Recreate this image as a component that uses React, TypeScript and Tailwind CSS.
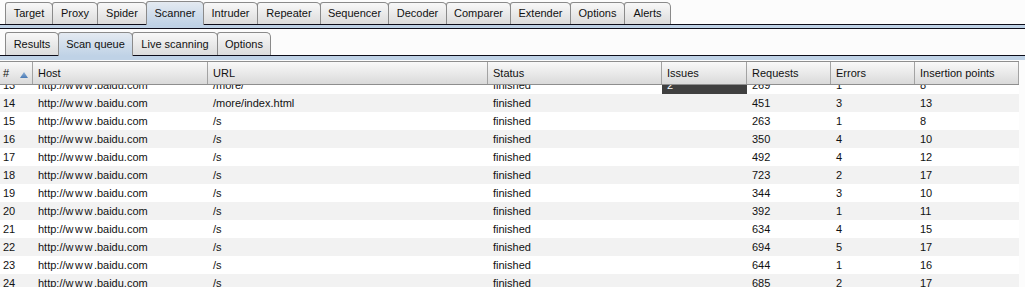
import React from "react";

type TabDef = { label: string; w: string; selected?: boolean };

const topTabs: TabDef[] = [
  { label: "Target", w: "w-[48px]" },
  { label: "Proxy", w: "w-[46px]" },
  { label: "Spider", w: "w-[50px]" },
  { label: "Scanner", w: "w-[58px]", selected: true },
  { label: "Intruder", w: "w-[55px]" },
  { label: "Repeater", w: "w-[64px]" },
  { label: "Sequencer", w: "w-[69px]" },
  { label: "Decoder", w: "w-[59px]" },
  { label: "Comparer", w: "w-[65px]" },
  { label: "Extender", w: "w-[61px]" },
  { label: "Options", w: "w-[55px]" },
  { label: "Alerts", w: "w-[47px]" },
];

const subTabs: TabDef[] = [
  { label: "Results", w: "w-[54px]" },
  { label: "Scan queue", w: "w-[75px]", selected: true },
  { label: "Live scanning", w: "w-[86px]" },
  { label: "Options", w: "w-[54px]" },
];

function Tab({ t, first, sub }: { t: TabDef; first: boolean; sub?: boolean }) {
  const base =
    "relative flex items-center justify-center border border-b-0 border-[#8a8a8a] rounded-tl-[3px] rounded-tr-[5px] text-[#111]";
  const pos = first ? "" : "-ml-px";
  if (t.selected) {
    return (
      <div
        className={`${base} ${pos} ${t.w} h-[24px] -mb-px z-10 bg-gradient-to-b from-[#e4eaf1] to-[#bfd2e6]`}
      >
        <span className="-mt-px">{t.label}</span>
      </div>
    );
  }
  return (
    <div
      className={`${base} ${pos} ${t.w} ${sub ? "h-[23px]" : "h-[22px]"} bg-gradient-to-b from-[#f8f8f8] to-[#dcdcdc]`}
    >
      <span>{t.label}</span>
    </div>
  );
}

const colW = [
  "w-[33px] pl-[3px]",
  "w-[175px] pl-[5px]",
  "w-[280px] pl-[5px]",
  "w-[174px] pl-[5px]",
  "w-[85px] pl-[5px]",
  "w-[84px] pl-[5px]",
  "w-[84px] pl-[5px]",
  "w-[104px] pl-[5px]",
];

const headers = ["#", "Host", "URL", "Status", "Issues", "Requests", "Errors", "Insertion points"];

const rows: [string, string, string, string, string, string, string, string][] = [
  ["13", "http://www.baidu.com", "/more/", "finished", "2", "269", "1", "8"],
  ["14", "http://www.baidu.com", "/more/index.html", "finished", "", "451", "3", "13"],
  ["15", "http://www.baidu.com", "/s", "finished", "", "263", "1", "8"],
  ["16", "http://www.baidu.com", "/s", "finished", "", "350", "4", "10"],
  ["17", "http://www.baidu.com", "/s", "finished", "", "492", "4", "12"],
  ["18", "http://www.baidu.com", "/s", "finished", "", "723", "2", "17"],
  ["19", "http://www.baidu.com", "/s", "finished", "", "344", "3", "10"],
  ["20", "http://www.baidu.com", "/s", "finished", "", "392", "1", "11"],
  ["21", "http://www.baidu.com", "/s", "finished", "", "634", "4", "15"],
  ["22", "http://www.baidu.com", "/s", "finished", "", "694", "5", "17"],
  ["23", "http://www.baidu.com", "/s", "finished", "", "644", "1", "16"],
  ["24", "http://www.baidu.com", "/s", "finished", "", "685", "2", "17"],
];

function HostText({ v }: { v: string }) {
  const m = v.match(/^(https?:\/\/)(www)(.*)$/);
  if (!m) return <>{v}</>;
  return (
    <span>
      {m[1]}
      <span className="tracking-[1.5px]">{m[2]}</span>
      {m[3]}
    </span>
  );
}

export default function App() {
  return (
    <div className="w-[1025px] h-[287px] overflow-hidden bg-[#fcfcfc] font-['Liberation_Sans',Arial,sans-serif] text-[11px] leading-none">
      {/* top tabs */}
      <div className="relative z-10 flex items-end h-[24px] pl-[5px]">
        {topTabs.map((t, i) => (
          <Tab key={t.label} t={t} first={i === 0} />
        ))}
      </div>
      <div className="h-[5px] border-t border-b border-[#0d0d1a] bg-[#bfd2e6]" />
      {/* sub tabs */}
      <div className="relative z-10 flex items-end h-[26px] pl-[5px]">
        {subTabs.map((t, i) => (
          <Tab key={t.label} t={t} first={i === 0} sub />
        ))}
      </div>
      <div className="h-[5px] border-t border-[#0d0d1a] bg-[#bfd2e6]" />
      <div className="h-px bg-[#fcfcfc]" />
      {/* table */}
      <div className="flex">
        <div className="w-[1019px] flex flex-col">
          <div className="relative z-10 flex h-[24px] border-t border-b border-[#8e8e8e] bg-gradient-to-b from-[#f9f9f9] to-[#dadada] text-[#111]">
            {headers.map((h, i) => (
              <div
                key={h}
                className={`${colW[i]} relative flex items-center border-r border-[#a3a3a3] h-full`}
              >
                <span>{h}</span>
                {i === 0 && (
                  <svg className="absolute left-[20px] top-[10px]" width="8" height="6" viewBox="0 0 8 6">
                    <defs>
                      <linearGradient id="sa" x1="0" y1="0" x2="0" y2="1">
                        <stop offset="0" stopColor="#8fb0d6" />
                        <stop offset="1" stopColor="#4a7bb5" />
                      </linearGradient>
                    </defs>
                    <polygon points="4,0 8,6 0,6" fill="url(#sa)" />
                  </svg>
                )}
              </div>
            ))}
          </div>
          <div className="h-[202px] overflow-hidden">
            <div className="-mt-[9px]">
              {rows.map((r, ri) => (
                <div
                  key={r[0]}
                  className={`flex h-[18px] text-[#111] ${ri % 2 === 1 ? "bg-[#f2f2f2]" : "bg-white"}`}
                >
                  {r.map((c, ci) => (
                    <div
                      key={ci}
                      className={`${colW[ci]} flex items-center h-full ${
                        ci === 4 && c !== "" ? "bg-[#404040] text-white" : ""
                      }`}
                    >
                      {ci === 1 ? <HostText v={c} /> : c}
                    </div>
                  ))}
                </div>
              ))}
            </div>
          </div>
        </div>
        <div className="flex-1 bg-[#fcfcfc]" />
      </div>
    </div>
  );
}
